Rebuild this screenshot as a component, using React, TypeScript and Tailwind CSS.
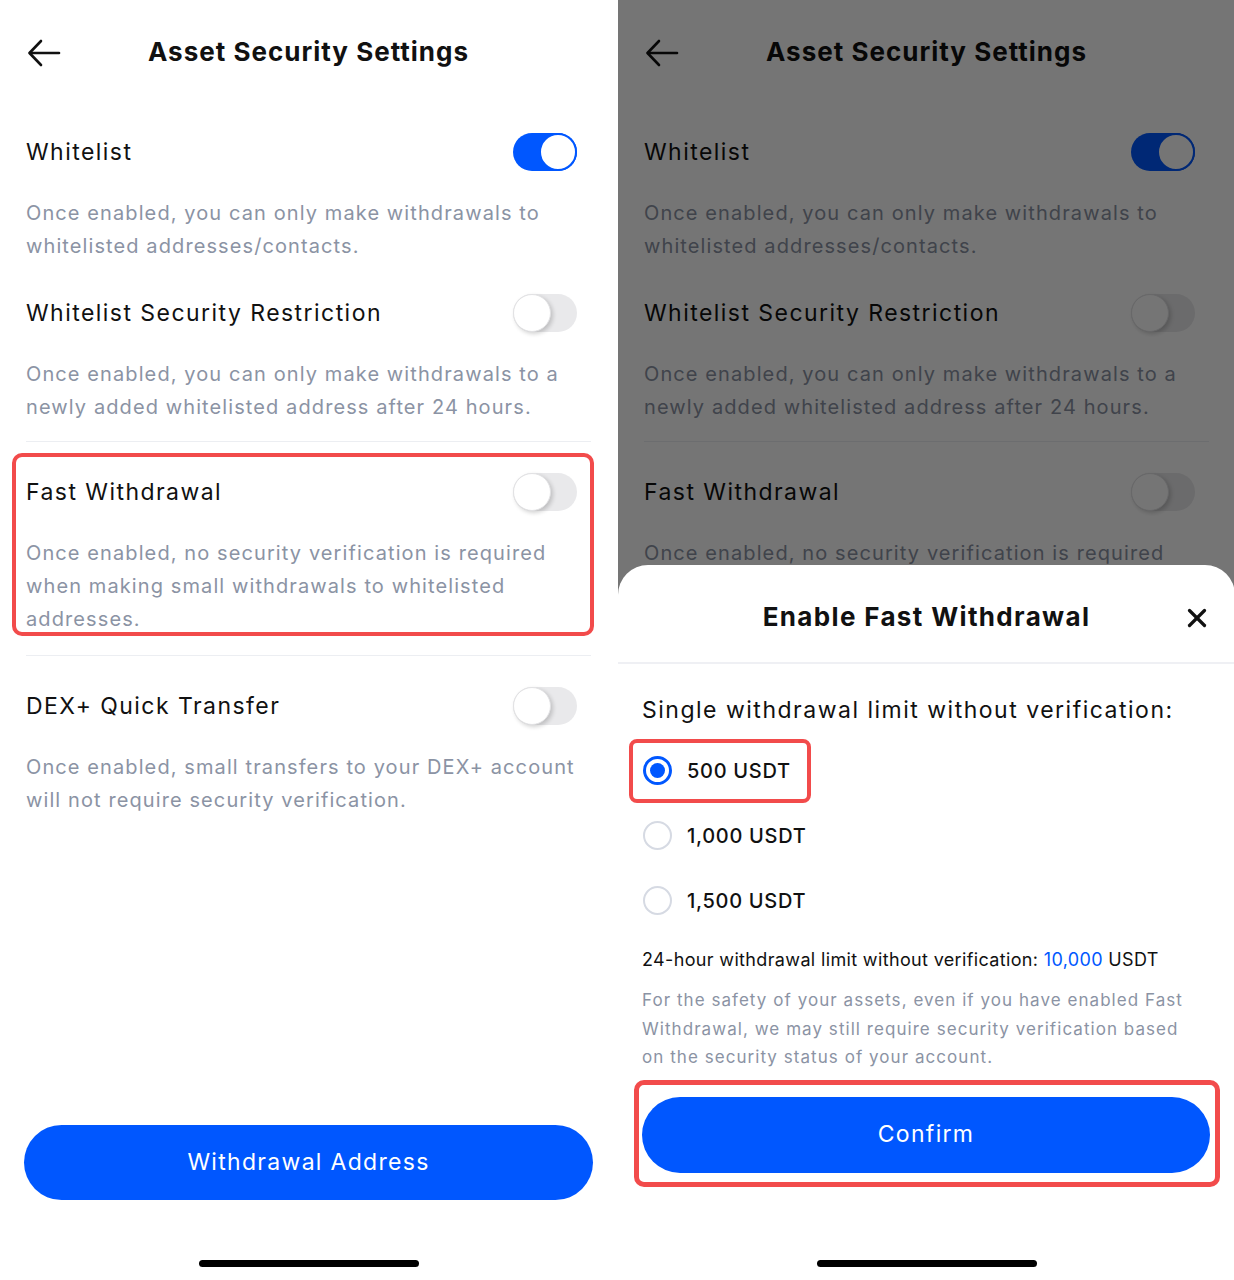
import { X } from "lucide-react";

const items = [
  {
    title: "Whitelist",
    on: true,
    desc: "Once enabled, you can only make withdrawals to whitelisted addresses/contacts.",
  },
  {
    title: "Whitelist Security Restriction",
    on: false,
    desc: "Once enabled, you can only make withdrawals to a newly added whitelisted address after 24 hours.",
  },
  {
    title: "Fast Withdrawal",
    on: false,
    desc: "Once enabled, no security verification is required when making small withdrawals to whitelisted addresses.",
  },
  {
    title: "DEX+ Quick Transfer",
    on: false,
    desc: "Once enabled, small transfers to your DEX+ account will not require security verification.",
  },
];

function Toggle({ on }: { on: boolean }) {
  if (on) {
    return (
      <div className="flex h-[38px] w-16 justify-end rounded-full bg-[#0057ff]">
        <div className="h-[38px] w-[38px] rounded-full border-2 border-[#0057ff] bg-white" />
      </div>
    );
  }
  return (
    <div className="flex h-[38px] w-16 rounded-full bg-[#e9e9eb]">
      <div className="h-[38px] w-[38px] rounded-full border border-[#e2e2e4] bg-white shadow-[2px_2px_4px_rgba(0,0,0,0.18)]" />
    </div>
  );
}

function BackArrow() {
  return (
    <svg width="34" height="30" viewBox="0 0 34 30" fill="none" stroke="#111" strokeWidth="2.6" strokeLinecap="round" strokeLinejoin="round">
      <path d="M32 15H3" />
      <path d="M14 3L2.5 15L14 27" />
    </svg>
  );
}

function SettingItem({ title, on, desc }: { title: string; on: boolean; desc: string }) {
  return (
    <div className="px-[26px] pt-[30px]">
      <div className="flex h-10 items-center justify-between pr-[14px]">
        <span className="text-[23px] tracking-[1.45px] text-[#111]">{title}</span>
        <Toggle on={on} />
      </div>
      <p className="mt-[25px] pr-[14px] text-[20px] leading-[33px] tracking-[1.1px] text-[#8b93a4]">{desc}</p>
    </div>
  );
}

function SettingsScreen({ highlight }: { highlight: boolean }) {
  return (
    <div className="flex h-[1280px] w-[617px] flex-col bg-white">
      <div className="relative flex h-[102px] items-center justify-center">
        <div className="absolute left-[27px] top-[38px]">
          <BackArrow />
        </div>
        <h1 className="text-[26px] font-bold tracking-[1px] text-[#111]">Asset Security Settings</h1>
      </div>

      <SettingItem {...items[0]} />
      <SettingItem {...items[1]} />
      <div className="mx-[26px] mt-[17px] h-px bg-[#eceef2]" />
      <div className="relative pb-[19px]">
        <SettingItem {...items[2]} />
        {highlight && (
          <div className="absolute left-[12px] top-[11px] h-[183px] w-[582px] rounded-[10px] border-4 border-[#f24b4b]" />
        )}
      </div>
      <div className="mx-[26px] h-px bg-[#eceef2]" />
      <SettingItem {...items[3]} />

      <div className="mt-auto px-[24px]">
        <button className="flex h-[75px] w-full items-center justify-center rounded-full bg-[#0057ff] text-[23px] tracking-[1.3px] text-white">
          Withdrawal Address
        </button>
      </div>
      <div className="mb-[13px] mt-[60px] flex justify-center">
        <div className="h-[7px] w-[220px] rounded-full bg-black" />
      </div>
    </div>
  );
}

function Radio({ checked }: { checked: boolean }) {
  if (checked) {
    return (
      <div className="flex h-[29px] w-[29px] items-center justify-center rounded-full border-[3px] border-[#0057ff]">
        <div className="h-[15px] w-[15px] rounded-full bg-[#0057ff]" />
      </div>
    );
  }
  return <div className="h-[29px] w-[29px] rounded-full border-[2.5px] border-[#d6dae3]" />;
}

function FastWithdrawalSheet() {
  const options = ["500 USDT", "1,000 USDT", "1,500 USDT"];
  return (
    <div className="flex h-[715px] w-[617px] flex-col rounded-t-[30px] bg-white">
      <div className="relative flex h-[97px] items-center justify-center pt-[6px]">
        <h2 className="text-[26px] font-bold tracking-[1.35px] text-[#111]">Enable Fast Withdrawal</h2>
        <X className="absolute right-[23px] top-[38px]" size={30} strokeWidth={2.6} color="#111" />
      </div>
      <div className="h-[2px] bg-[#eff0f4]" />

      <div className="px-[24px]">
        <p className="mt-[31px] text-[23px] leading-[30px] tracking-[1.5px] text-[#111]">
          Single withdrawal limit without verification:
        </p>
        <div className="mt-[13px]">
          {options.map((o, i) => (
            <div key={o} className="relative flex h-[65px] items-center gap-[15px] pl-px">
              <Radio checked={i === 0} />
              <span className="text-[20px] font-medium tracking-[0.7px] text-[#111]">{o}</span>
              {i === 0 && (
                <div className="absolute left-[-13px] top-px h-[64px] w-[182px] rounded-[8px] border-4 border-[#f24b4b]" />
              )}
            </div>
          ))}
        </div>
        <p className="mt-[13px] text-[18px] leading-[28px] tracking-[0.35px] text-[#111]">
          24-hour withdrawal limit without verification: <span className="text-[#0057ff]">10,000</span> USDT
        </p>
        <p className="mt-[12px] pr-[16px] text-[17px] leading-[28.5px] tracking-[1.05px] text-[#8b93a4]">
          For the safety of your assets, even if you have enabled Fast Withdrawal, we may still require security verification based on the security status of your account.
        </p>
        <div className="relative mt-[25px] pr-px">
          <button className="flex h-[76px] w-full items-center justify-center rounded-full bg-[#0057ff] text-[23px] tracking-[1.3px] text-white">
            Confirm
          </button>
          <div className="absolute -bottom-[14px] -left-[8px] -right-[9px] -top-[17px] rounded-[10px] border-[5px] border-[#f24b4b]" />
        </div>
      </div>

      <div className="mb-[13px] mt-auto flex justify-center">
        <div className="h-[7px] w-[220px] rounded-full bg-black" />
      </div>
    </div>
  );
}

export default function App() {
  return (
    <div className="flex h-[1280px] w-[1234px] gap-px bg-white font-['Inter',sans-serif]">
      <div className="relative w-[617px] overflow-hidden">
        <SettingsScreen highlight />
      </div>
      <div className="relative w-[616px] overflow-hidden">
        <SettingsScreen highlight={false} />
        <div className="absolute inset-0 flex flex-col justify-end bg-black/[0.54]">
          <FastWithdrawalSheet />
        </div>
      </div>
    </div>
  );
}
